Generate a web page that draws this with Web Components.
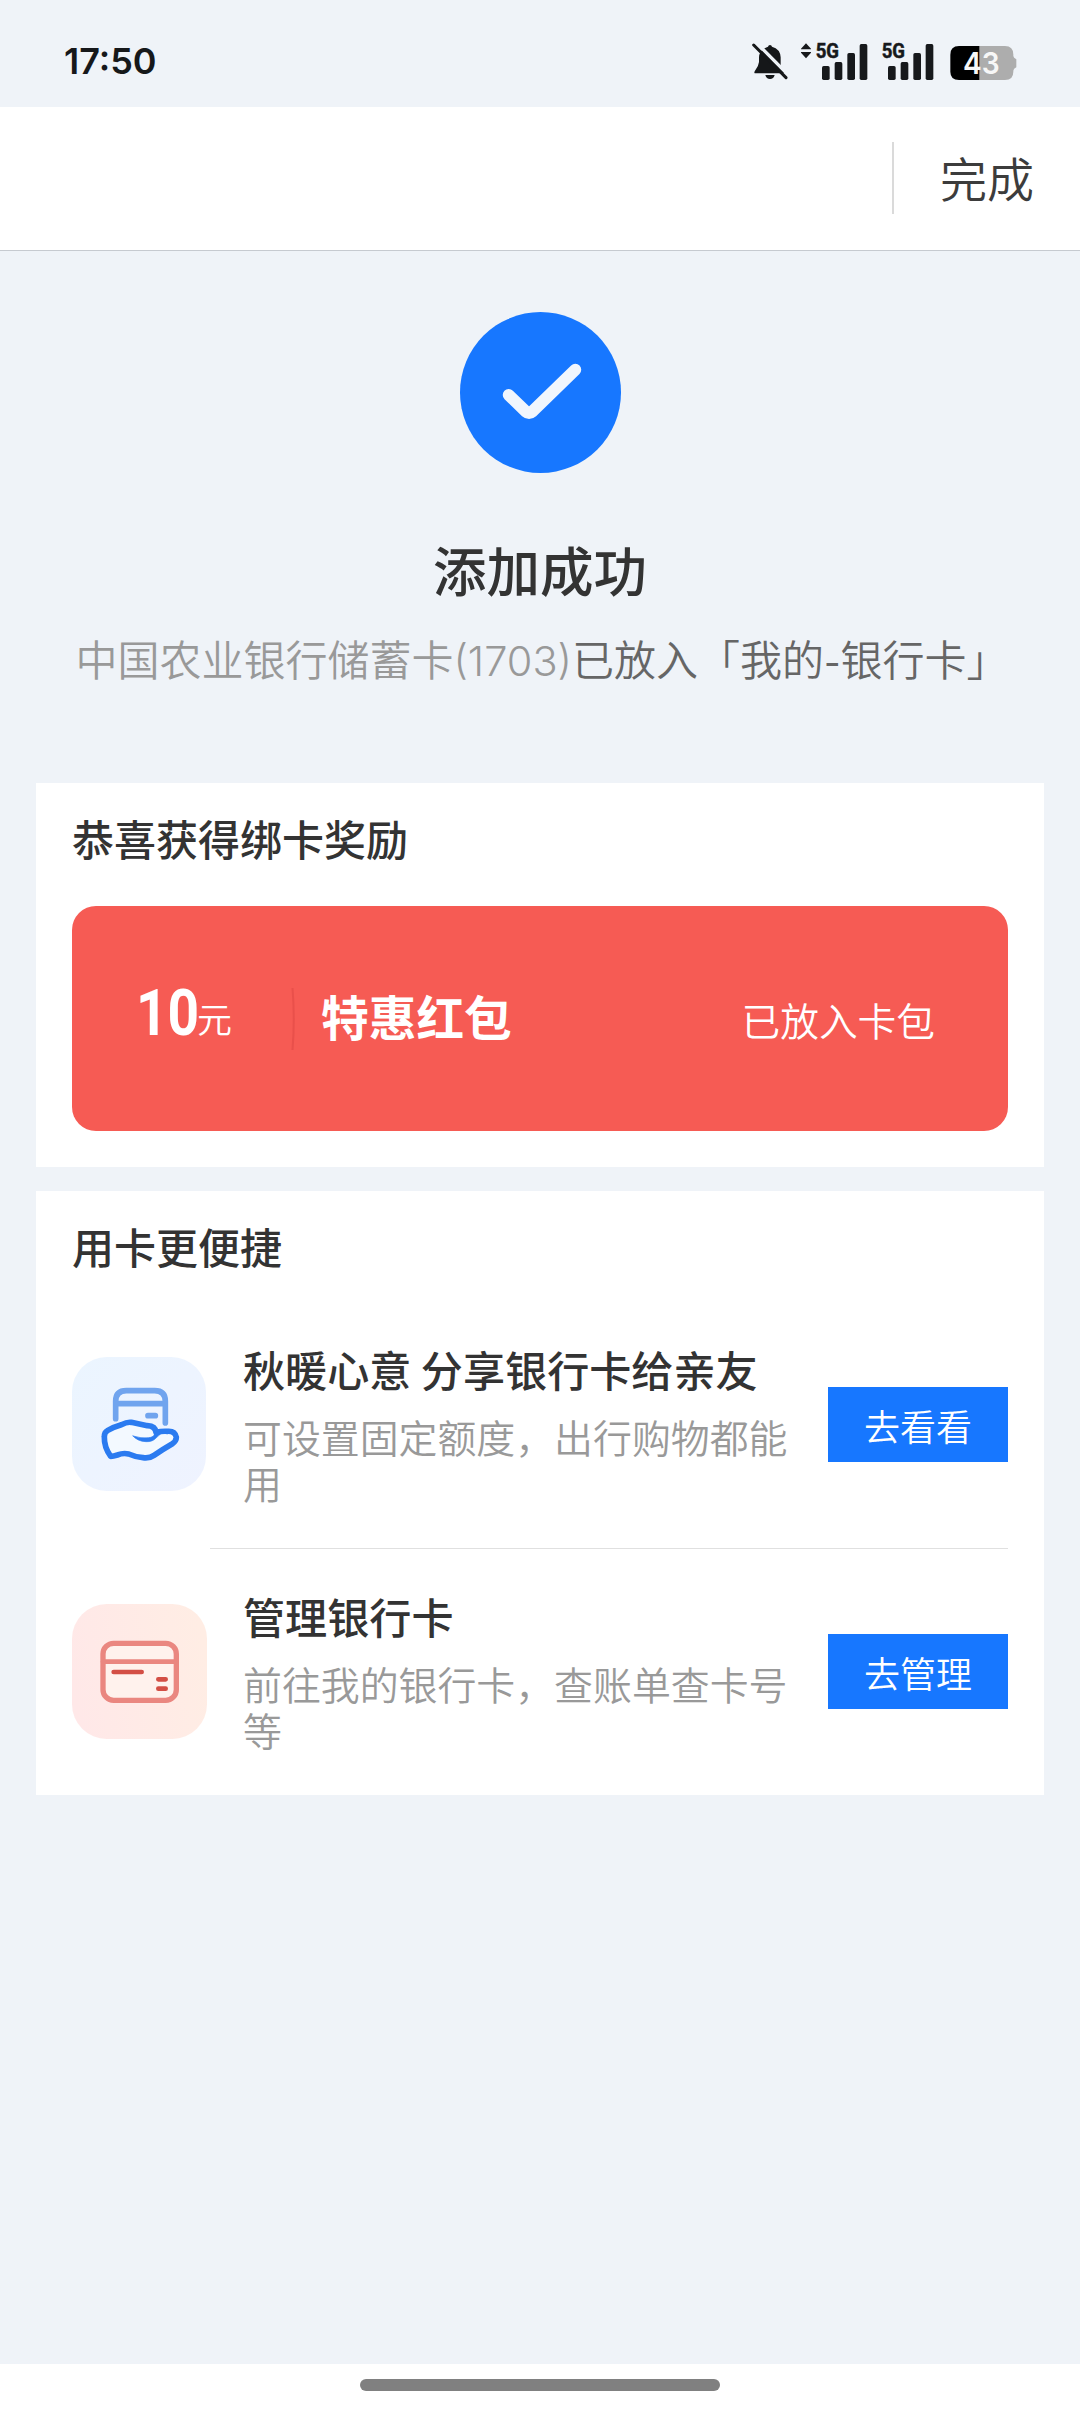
<!DOCTYPE html>
<html lang="zh-CN">
<head>
<meta charset="utf-8">
<title>添加成功</title>
<style>
  html, body { margin: 0; padding: 0; }
  body { width: 1080px; height: 2412px; background: #eff3f8; overflow: hidden; font-family: "Noto Sans CJK SC", sans-serif; color: #333; }
</style>
</head>
<body>
<result-page></result-page>
<script>
const define = (name, html) => customElements.define(name, class extends HTMLElement {
  constructor() {
    super();
    const t = document.createElement('template');
    t.innerHTML = html;
    this.attachShadow({ mode: 'open' }).appendChild(t.content.cloneNode(true));
  }
});

define('bell-icon', `
<style>:host{display:block;width:36px;height:38px}svg{display:block}</style>
<svg width="36" height="38" viewBox="66 69 108 114">
  <path d="M114 80Q115 75 120 75Q125 75 126 80Q151 87 152 112V134Q153 142 161 153Q165 160 157 160H77Q70 160 75 152Q86 138 87 126V112Q88 88 114 80Z" fill="#151719"/>
  <path d="M106 165H134Q131 177 120 177Q109 177 106 165Z" fill="#151719"/>
  <path d="M77 66L180 170" stroke="#eff3f8" stroke-width="10"/>
  <path d="M71 75L168 173" stroke="#151719" stroke-width="9" stroke-linecap="round"/>
</svg>`);

define('signal-icon', `
<style>:host{display:block;width:53px;height:38px}svg{display:block;overflow:visible}text{font:700 61px Roboto,sans-serif}
.arrows{display:none}:host([data-arrows]) .arrows{display:block}</style>
<svg width="53" height="38" viewBox="255 69 159 114" fill="#17191c">
  <path class="arrows" d="M228 70L243 86V88H213V86ZM228 115L243 98V96H213V98Z"/>
  <text x="257" y="113" textLength="70" lengthAdjust="spacingAndGlyphs" stroke="#17191c" stroke-width="1.500">5G</text>
  <rect x="276" y="138" width="23" height="42" rx="5"/>
  <rect x="314" y="126" width="23" height="54" rx="5"/>
  <rect x="352" y="99" width="23" height="81" rx="5"/>
  <rect x="389" y="72" width="23" height="108" rx="5"/>
</svg>`);

define('battery-icon', `
<style>:host{display:block;width:67px;height:38px}svg{display:block}text{font:600 88px Inter,sans-serif}</style>
<svg width="67" height="38" viewBox="659 69 201 114">
  <path d="M840 108H848Q850 113 858 118V142Q850 146 848 152H840Z" fill="#adadad"/>
  <path d="M746 78H824Q849 78 849 104V155Q849 180 824 180H746Z" fill="#adadad"/>
  <path d="M747 78H686Q660 78 660 104V155Q660 180 686 180H747Z" fill="#000"/>
  <text x="698" y="163" fill="#f7f7f7" textLength="110" lengthAdjust="spacingAndGlyphs">43</text>
</svg>`);

define('status-bar', `
<style>
:host{display:flex;justify-content:space-between;align-items:flex-start;box-sizing:border-box;height:107px;padding:43px 63px 0 64px}
.time{font:600 36px/37px Inter,sans-serif;color:#16181a}
.icons{display:flex}
signal-icon.a{margin-left:27px}signal-icon.b{margin-left:13px}battery-icon{margin-left:16px}
</style>
<div class="time">17:50</div>
<div class="icons"><bell-icon></bell-icon><signal-icon class="a" data-arrows></signal-icon><signal-icon class="b"></signal-icon><battery-icon></battery-icon></div>`);

define('title-bar', `
<style>
:host{display:flex;justify-content:flex-end;align-items:center;box-sizing:border-box;height:144px;padding:0 46px 2px 0;background:#fff;border-bottom:1px solid #c6cad0}
i{width:2px;height:72px;background:#dadada}
.done{margin:-1px 0 0 46px;font-size:47px;line-height:70px;font-weight:350;color:#3c3c3c}
</style>
<i></i><div class="done"><slot></slot></div>`);

define('result-header', `
<style>
:host{display:flex;flex-direction:column;align-items:center;box-sizing:border-box;height:532px;padding-top:61px}
svg{display:block;margin-left:1px}
h1{margin:56px 0 0;font-size:53.500px;line-height:80px;font-weight:500;color:#333}
p{margin:9px 0 0 4px;font-size:42px;line-height:80px;font-weight:350;color:#666;white-space:nowrap}
.n{font-family:Inter,sans-serif;font-size:41.500px;font-weight:300}
.h{font-size:36px;font-weight:400}
p .g{color:#999}
</style>
<svg width="161" height="161" viewBox="459.5 311 162 162">
  <circle cx="540.5" cy="392" r="81" fill="#1777ff"/>
  <path d="M508.5 394.5L525.5 411Q529 414 532.500 411L575.500 369" fill="none" stroke="#f1f6fd" stroke-width="12" stroke-linecap="round"/>
</svg>
<h1>添加成功</h1>
<p><span class="g">中国农业银行储蓄卡<span class="n">(1703)</span></span>已放入「我的<span class="n h">-</span>银行卡」</p>`);

define('info-card', `
<style>
:host{display:block;margin:0 36px 24px;box-sizing:border-box;padding:0 36px;background:#fff}
h2{margin:0;height:110px;font-size:42px;line-height:109px;font-weight:500;color:#333}
</style>
<h2><slot name="heading"></slot></h2><slot></slot>`);

define('coupon-strip', `
<style>
:host{display:flex;align-items:center;box-sizing:border-box;height:225px;margin-top:13px;padding:0 73px 0 64px;border-radius:24px;background:#f65b54;color:#fff}
.amt{display:flex;align-items:baseline;width:155px;height:76px;margin-top:-9px}
b{display:block;width:61px;font:700 64px/76px Roboto,sans-serif;white-space:nowrap}
b span{display:inline-block;transform:scaleX(.86);transform-origin:0 50%}
.u{font-size:35px;line-height:60px;font-weight:350;position:relative;top:-2px}
svg{display:block}
.name{margin:-5px 0 0 25px;font-size:47.700px;line-height:72px;font-weight:700;flex:1}
.st{font-size:38.700px;line-height:60px;font-weight:350;margin-top:1px}
</style>
<div class="amt"><b><span>10</span></b><span class="u">元</span></div>
<svg width="5" height="62" viewBox="0 0 5 62"><path d="M1.500 0Q4 31 1.500 62" fill="none" stroke="#e9504b" stroke-width="2"/></svg>
<div class="name"><slot></slot></div>
<div class="st"><slot name="state"></slot></div>`);

define('share-icon', `
<style>:host,svg{display:block}</style>
<svg width="134" height="134" viewBox="36 21 402 402" fill="none" stroke-linecap="round" stroke-linejoin="round">
  <defs><linearGradient id="a" x1="0" y1="0" x2="1" y2="1"><stop stop-color="#ebf5ff"/><stop offset="1" stop-color="#eff3ff"/></linearGradient></defs>
  <rect x="36" y="21" width="402" height="402" rx="104" fill="url(#a)"/>
  <path d="M167 206V154Q167 122 199 122H284Q316 122 316 154V219M167 161H316" stroke="#70a4ee" stroke-width="17"/>
  <path d="M264 197H286" stroke="#70a4ee" stroke-width="17"/>
  <path d="M142 242Q162 230 184 224Q202 215 214 217L262 227Q286 228 288 247Q305 243 322 244Q345 242 349 262Q349 274 336 282Q305 300 282 316Q268 326 249 323Q226 321 206 312Q190 308 172 315Q160 319 152 319Q132 292 133 260Q133 247 142 242Z" fill="#f3f9ff" stroke="#2b7bf0" stroke-width="17"/>
  <path d="M219 258Q244 266 265 263Q282 263 288 246L318 245Q301 249 288 264Q278 276 258 275Q232 274 219 258Z" fill="#2b7bf0" stroke="#2b7bf0" stroke-width="2"/>
</svg>`);

define('card-icon', `
<style>:host,svg{display:block}</style>
<svg width="135" height="135" viewBox="36 42 405 405" fill="none" stroke-linecap="round">
  <defs><linearGradient id="a" x1="0" y1=".6" x2="1" y2=".4"><stop stop-color="#ffe8e8"/><stop offset="1" stop-color="#ffede4"/></linearGradient></defs>
  <rect x="36" y="42" width="405" height="405" rx="104" fill="url(#a)"/>
  <rect x="129" y="160" width="220" height="171" rx="32" fill="#fff2ed" stroke="#ea8780" stroke-width="16"/>
  <path d="M129 215H349" stroke="#ea8780" stroke-width="14"/>
  <path d="M161 246H245M295 268H317M295 296H317" stroke="#d34f45" stroke-width="14"/>
</svg>`);

define('action-row', `
<style>
:host{display:flex;align-items:center;height:247px}
.ic{width:135px;flex:none;margin-top:-1px}
.tx{width:560px;margin:-5px 0 0 36px;flex:none;display:flex;flex-direction:column;gap:14px}
h3{margin:0;font-size:42.100px;line-height:60px;font-weight:500;color:#333;white-space:nowrap}
p{margin:0;width:552px;font-size:38.900px;line-height:46.500px;font-weight:350;color:#999}
.bt{margin-left:auto;width:180px;height:75px;background:#1777ff;color:#fff;font-size:36px;line-height:76px;text-align:center;font-weight:350}
</style>
<div class="ic"><slot name="icon"></slot></div>
<div class="tx"><h3><slot name="title"></slot></h3><p><slot></slot></p></div>
<div class="bt"><slot name="action"></slot></div>`);

define('home-indicator', `
<style>:host{display:flex;justify-content:center;box-sizing:border-box;height:48px;padding-top:15px;background:#fff}i{width:360px;height:12px;border-radius:6px;background:#808080}</style><i></i>`);

define('result-page', `
<style>
:host{display:flex;flex-direction:column;height:2412px}
.reward{height:384px}
.tools{height:604px}
hr{margin:0 0 -1px 138px;border:0;height:1px;background:#e0e0e0}
.space{flex:1}
</style>
<status-bar></status-bar>
<title-bar>完成</title-bar>
<result-header></result-header>
<info-card class="reward"><span slot="heading">恭喜获得绑卡奖励</span>
  <coupon-strip>特惠红包<span slot="state">已放入卡包</span></coupon-strip>
</info-card>
<info-card class="tools"><span slot="heading">用卡更便捷</span>
  <action-row><share-icon slot="icon"></share-icon><span slot="title">秋暖心意 分享银行卡给亲友</span>可设置固定额度，出行购物都能用<span slot="action">去看看</span></action-row>
  <hr>
  <action-row><card-icon slot="icon"></card-icon><span slot="title">管理银行卡</span>前往我的银行卡，查账单查卡号等<span slot="action">去管理</span></action-row>
</info-card>
<div class="space"></div>
<home-indicator></home-indicator>`);
</script>
</body>
</html>
